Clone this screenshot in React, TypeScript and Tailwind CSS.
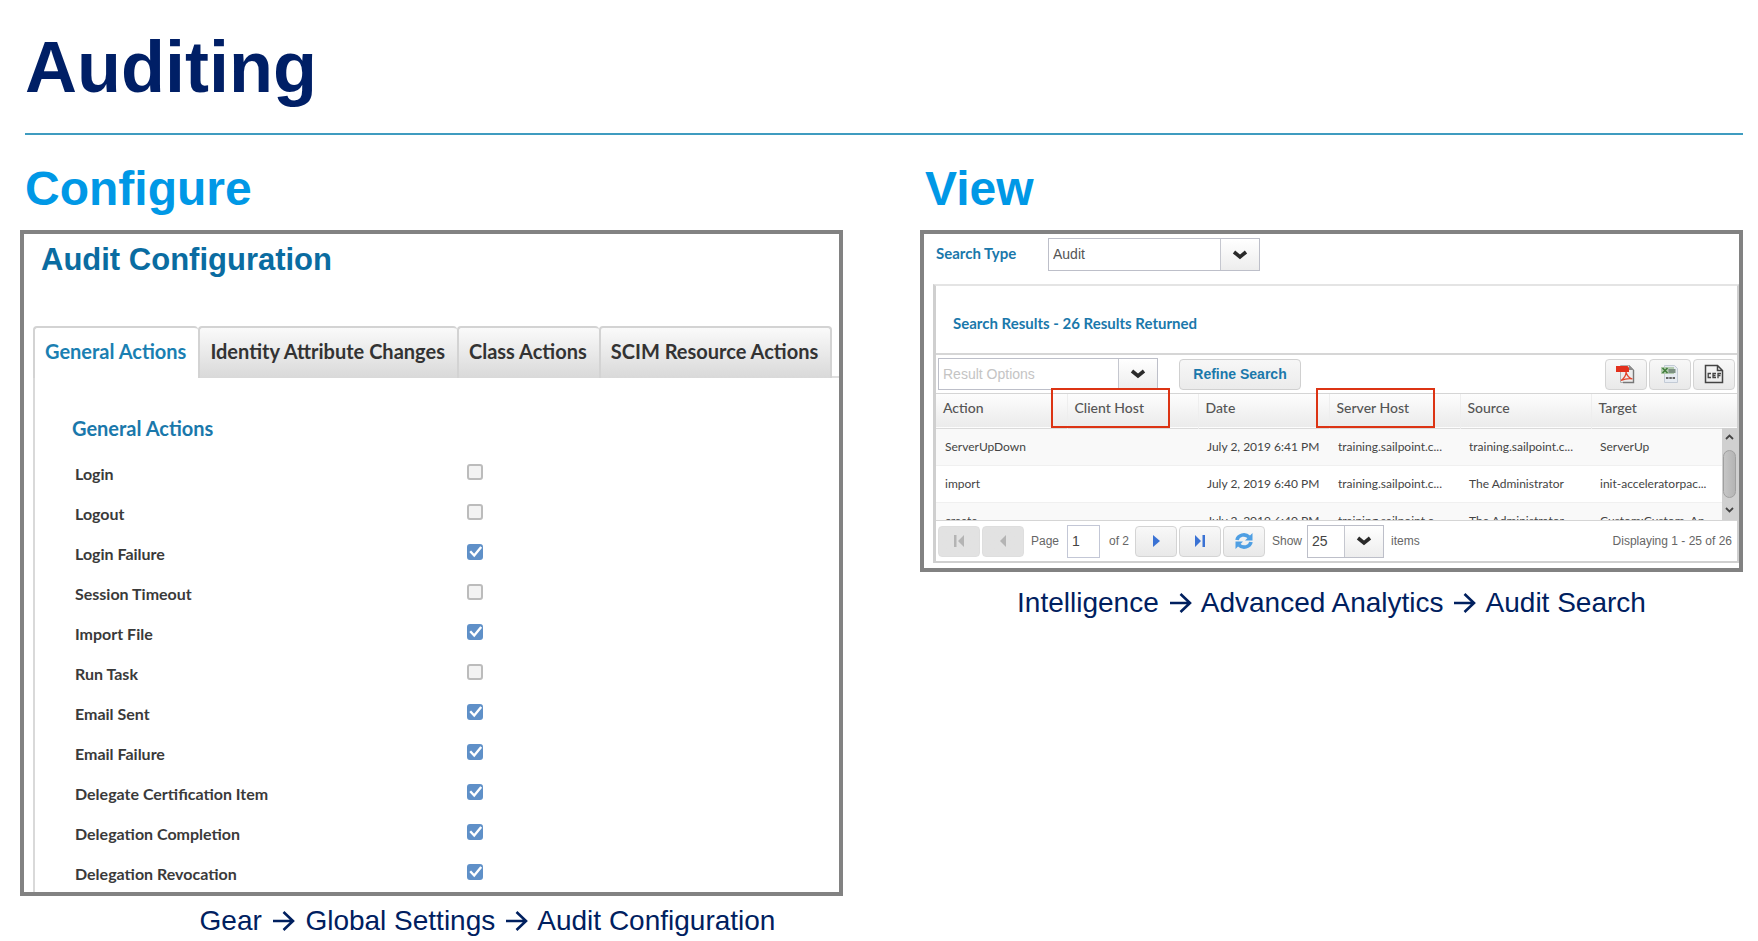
import { useState } from "react";
import type { ReactNode } from "react";

const tabs = ["General Actions", "Identity Attribute Changes", "Class Actions", "SCIM Resource Actions"];

const actions: [string, boolean][] = [
  ["Login", false],
  ["Logout", false],
  ["Login Failure", true],
  ["Session Timeout", false],
  ["Import File", true],
  ["Run Task", false],
  ["Email Sent", true],
  ["Email Failure", true],
  ["Delegate Certification Item", true],
  ["Delegation Completion", true],
  ["Delegation Revocation", true],
];

const columns = ["Action", "Client Host", "Date", "Server Host", "Source", "Target"];

const rows = [
  ["ServerUpDown", "", "July 2, 2019 6:41 PM", "training.sailpoint.c...", "training.sailpoint.c...", "ServerUp"],
  ["import", "", "July 2, 2019 6:40 PM", "training.sailpoint.c...", "The Administrator", "init-acceleratorpac..."],
  ["create", "", "July 2, 2019 6:40 PM", "training.sailpoint.c...", "The Administrator", "Custom:Custom_Ap..."],
];

function Chevron() {
  return (
    <svg viewBox="0 0 16 10" className="h-[10px] w-4" fill="none" stroke="#2a2a2a" strokeWidth="3.6">
      <path d="M2 2l6 5 6-5" />
    </svg>
  );
}

function Arrow() {
  return (
    <svg viewBox="0 0 28 20" className="inline-block h-5 w-7 align-[-1px]" fill="none" stroke="#00205f" strokeWidth="2.6">
      <path d="M3 10h20M13.500 1l9.500 9-9.500 9" />
    </svg>
  );
}

function Caption({ steps, className }: { steps: string[]; className: string }) {
  return (
    <p className={"text-center text-[28px] leading-8 text-[#00205f] " + className}>
      {steps.map((step, i) => (
        <span key={step}>
          {i > 0 && (
            <>
              {" "}
              <Arrow />{" "}
            </>
          )}
          {step}
        </span>
      ))}
    </p>
  );
}

function IconButton({ label, disabled, children }: { label: string; disabled?: boolean; children: ReactNode }) {
  return (
    <button
      type="button"
      aria-label={label}
      disabled={disabled}
      className="flex h-[31px] w-[42px] shrink-0 items-center justify-center rounded-sm border border-[#d4d4d4] bg-linear-to-b from-[#f8f8f8] to-[#e9e9e9] disabled:border-[#dedede] disabled:from-[#e2e2e2] disabled:to-[#e2e2e2]"
    >
      {children}
    </button>
  );
}

function Combo({ id, label, value, placeholder, className, inputClass }: { id: string; label: string; value?: string; placeholder?: string; className: string; inputClass: string }) {
  return (
    <div className={"flex shrink-0 border border-[#bdbfc9] bg-white " + className}>
      <input
        id={id}
        aria-label={label}
        defaultValue={value}
        placeholder={placeholder}
        className={"min-w-0 flex-1 pl-1 outline-none placeholder:text-[#c4c4c4] " + inputClass}
      />
      <button type="button" aria-label={"Open " + label} className="flex w-[39px] items-center justify-center border-l border-[#c5c7cf] bg-linear-to-b from-white to-[#ededed]">
        <Chevron />
      </button>
    </div>
  );
}

function ConfigurePanel() {
  const [active, setActive] = useState(0);
  return (
    <div className="border-4 border-[#828282] font-['Lato',sans-serif]">
      <h3 className="pt-[6px] pl-[17px] font-['Liberation_Sans',sans-serif] text-[31px] leading-10 font-bold text-[#0a6ca1]">Audit Configuration</h3>
      <div className="mt-[46px] ml-[9px]">
        <div role="tablist" className="flex">
          {tabs.map((tab, i) => (
            <button
              key={tab}
              type="button"
              role="tab"
              aria-selected={i === active}
              onClick={() => setActive(i)}
              className="h-[52px] shrink-0 rounded-t-sm border-t-2 border-l-2 border-[#d3d3d3] bg-linear-to-b from-[#fafafa] to-[#d9d9d9] pr-3 pb-1 pl-[10px] text-[20px] font-bold whitespace-nowrap text-[#333333] last-of-type:border-r-2 aria-selected:bg-none aria-selected:text-[#1a7fb2]"
            >
              {tab}
            </button>
          ))}
          <span className="flex-1 border-b-2 border-[#dedede]" />
        </div>
        <div role="tabpanel" className="border-l-2 border-[#d9d9d9] pt-9 pl-[37px]">
          <h4 className="text-[20px] leading-7 font-bold text-[#1a78ab]">General Actions</h4>
          <ul className="mt-[10px] pl-[3px]">
            {actions.map(([name, checked], i) => (
              <li key={name} className="grid h-10 grid-cols-[392px_1fr] items-center">
                <label htmlFor={"action-" + i} className="pt-1 text-[16px] font-bold text-[#3a3a3a]">
                  {name}
                </label>
                <span className="relative flex size-4">
                  <input
                    id={"action-" + i}
                    type="checkbox"
                    defaultChecked={checked}
                    className="peer size-4 appearance-none rounded-[3px] border-2 border-[#bcbcbc] bg-[#f3f3f3] checked:border-[#5f90c8] checked:bg-[#5f90c8]"
                  />
                  <svg viewBox="0 0 16 16" className="pointer-events-none absolute inset-0 hidden size-4 peer-checked:block" fill="none" stroke="#fff" strokeWidth="2.4">
                    <path d="M3.2 7.2l4 4.3 7-8.500" />
                  </svg>
                </span>
              </li>
            ))}
          </ul>
        </div>
      </div>
    </div>
  );
}

function ResultsTable() {
  return (
    <div className="relative">
      <div className="relative h-[128px] overflow-hidden border-y border-[#d5d5d5] font-['Lato',sans-serif]">
        <table className="w-full table-fixed border-collapse text-left">
          <colgroup>
            <col className="w-[131px]" />
            <col className="w-[131px]" />
            <col className="w-[131px]" />
            <col className="w-[131px]" />
            <col className="w-[131px]" />
            <col />
          </colgroup>
          <thead>
            <tr className="h-[34px] border-b border-[#dadada] bg-linear-to-b from-[#fdfdfd] to-[#ebebeb]">
              {columns.map((c) => (
                <th key={c} scope="col" className="border-r border-[#eeeeee] pb-1.5 pl-[7px] text-[14px] leading-5 font-medium text-[#555555] last:border-r-0">
                  {c}
                </th>
              ))}
            </tr>
          </thead>
          <tbody>
            {rows.map((row, r) => (
              <tr key={r} className="h-[37px] border-b border-[#f0f0f0] odd:bg-[#f9f9f9]">
                {row.map((cell, c) => (
                  <td key={c} className="truncate pl-[9px] text-[12px] leading-4 text-[#444444]">
                    {cell}
                  </td>
                ))}
              </tr>
            ))}
          </tbody>
        </table>
        <div aria-hidden="true" className="absolute top-[34px] right-0 bottom-0 flex w-[15px] flex-col items-center justify-between bg-[#d0d0d0]">
          <svg viewBox="0 0 15 18" className="w-[15px]" fill="none" stroke="#444" strokeWidth="1.8">
            <path d="M4 11l3.500-3.500L11 11" />
          </svg>
          <span className="h-12 w-[13px] rounded-full border border-[#a0a0a0] bg-linear-to-r from-[#c6c6c6] to-[#b4b4b4]" />
          <svg viewBox="0 0 15 18" className="w-[15px]" fill="none" stroke="#444" strokeWidth="1.8">
            <path d="M4 6l3.500 3.500L11 6" />
          </svg>
        </div>
      </div>
      <span className="pointer-events-none absolute -top-[5px] left-[115px] h-10 w-[119px] border-2 border-[#dc3414]" />
      <span className="pointer-events-none absolute -top-[5px] left-[380px] h-10 w-[119px] border-2 border-[#dc3414]" />
    </div>
  );
}

function ViewPanel() {
  return (
    <div className="border-4 border-[#828282] pb-[5px]">
      <div className="flex h-[50px] items-start pt-1 pl-3">
        <label htmlFor="search-type" className="w-[112px] pt-[3px] font-['Lato',sans-serif] text-[15px] leading-6 font-bold text-[#1a78ab]">
          Search Type
        </label>
        <Combo id="search-type" label="Search Type" value="Audit" className="h-[33px] w-[212px]" inputClass="text-[14px] text-[#555555]" />
      </div>
      <section className="ml-[9px] border-t-2 border-r-2 border-b-2 border-l-3 border-[#cfcfcf] border-t-[#e4e4e4]">
        <h4 className="border-b-2 border-[#d6d6d6] pt-[25px] pb-[18px] pl-[17px] font-['Lato',sans-serif] text-[15px] leading-6 font-bold text-[#1a78ab]">
          Search Results - 26 Results Returned
        </h4>
        <div className="flex h-[38px] items-center pr-0.5 pl-0.5">
          <Combo id="result-options" label="Result Options" placeholder="Result Options" className="h-8 w-[220px]" inputClass="text-[14px] text-[#555555]" />
          <button type="button" className="ml-[21px] h-[31px] w-[122px] rounded-sm border border-[#d0d0d0] bg-linear-to-b from-[#f7f7f7] to-[#ebebeb] text-[14px] font-bold text-[#1a78ab]">
            Refine Search
          </button>
          <div className="ml-auto flex gap-0.5">
            <IconButton label="Export PDF">
              <svg viewBox="0 0 20 20" className="size-5">
                <path d="M4.500 1.500h9l4 4v13h-13z" fill="#ededed" stroke="#b0b0b0" />
                <path d="M17.500 6v12.500H7" fill="none" stroke="#777" strokeWidth="1.4" />
                <path d="M13 1l5 5h-5z" fill="#8a8a8a" />
                <path d="M0 2h11.500l1.500 1.500V8H0z" fill="#e2301c" />
                <path d="M5 16.500c3-2 5-5 5-8.500 1 4 3 6 6.500 7-4-.8-7-.3-11.500 1.500z" fill="none" stroke="#e2452c" strokeWidth="1.2" />
              </svg>
            </IconButton>
            <IconButton label="Export Excel CSV">
              <svg viewBox="0 0 20 20" className="size-5">
                <path d="M4.500 1.500h10l3 3v14h-13z" fill="#e6ebf2" stroke="#c3cbd6" />
                <path d="M1 3h13v7H1z" fill="#b4ccb1" />
                <path d="M2.500 4l5 5M7.500 4l-5 5" stroke="#3f7e3b" strokeWidth="1.600" />
                <path d="M8.500 5h7v4h-7z" fill="#7d9183" />
                <path d="M6 14h9" stroke="#666" strokeWidth="2" strokeDasharray="2.500 .8" />
              </svg>
            </IconButton>
            <IconButton label="Export CEF">
              <svg viewBox="0 0 20 20" className="size-5" fill="none" stroke="#444" strokeWidth="1.5">
                <path d="M1.500 9V1.500h12l5 5V18.500h-17V9M13.500 1.500v5h5" />
                <path d="M7 9.500H4.200v4H7M12 9.500H9v4h3M9 11.500h2.500M14 14.200V9.500h3M14 11.500h2.500" strokeWidth="1.300" />
              </svg>
            </IconButton>
          </div>
        </div>
        <ResultsTable />
        <div className="flex h-10 items-center pr-[5px] pl-0.5 text-[12px] text-[#666666]">
          <div className="flex gap-0.5">
            <IconButton label="First page" disabled>
              <svg viewBox="0 0 14 14" className="size-[14px]" fill="#b4b4b4">
                <path d="M2 1h2.500v12H2zM12 1v12L6 7z" />
              </svg>
            </IconButton>
            <IconButton label="Previous page" disabled>
              <svg viewBox="0 0 14 14" className="size-[14px]" fill="#b4b4b4">
                <path d="M10 1v12L4 7z" />
              </svg>
            </IconButton>
          </div>
          <label htmlFor="page" className="w-[43px] pl-[7px]">
            Page
          </label>
          <input id="page" defaultValue="1" className="h-[33px] w-[33px] border border-[#c3c7d6] pl-1 text-[14px] text-[#444444] outline-none" />
          <span className="w-[35px] pl-[9px] whitespace-nowrap">of 2</span>
          <div className="flex gap-0.5">
            <IconButton label="Next page">
              <svg viewBox="0 0 14 14" className="size-[14px]" fill="#3a72d4">
                <path d="M4 1v12l7-6z" />
              </svg>
            </IconButton>
            <IconButton label="Last page">
              <svg viewBox="0 0 14 14" className="size-[14px]" fill="#3a72d4">
                <path d="M2 1v12l6-6zM9.500 1H12v12H9.500z" />
              </svg>
            </IconButton>
            <IconButton label="Refresh">
              <svg viewBox="0 0 20 20" className="size-5" fill="none" stroke="#4f9fe3" strokeWidth="3.600">
                <path d="M3 9c1-5 8-7 12-3M17 11c-1 5-8 7-12 3" />
                <path d="M18.500 2v7.500H11zM1.500 18v-7.500H9z" fill="#4f9fe3" stroke="none" />
              </svg>
            </IconButton>
          </div>
          <label htmlFor="page-size" className="w-[42px] pl-[7px]">
            Show
          </label>
          <Combo id="page-size" label="Page size" value="25" className="h-[33px] w-[77px]" inputClass="text-[14px] text-[#444444]" />
          <span className="pl-[7px]">items</span>
          <span className="ml-auto whitespace-nowrap">Displaying 1 - 25 of 26</span>
        </div>
      </section>
    </div>
  );
}

export default function App() {
  return (
    <main className="min-h-screen bg-white pr-[15px] pl-5 font-['Liberation_Sans',Arial,sans-serif]">
      <h1 className="ml-[5px] border-b-2 border-[#3f9cc0] pt-[27px] pb-[26px] text-[72px] leading-20 font-bold text-[#001f66]">Auditing</h1>
      <div className="grid grid-cols-2 items-start gap-[77px] pt-[26px]">
        <section>
          <h2 className="mb-[13px] pl-[5px] text-[48px] leading-14 font-bold text-[#0098e6]">Configure</h2>
          <ConfigurePanel />
          <Caption steps={["Gear", "Global Settings", "Audit Configuration"]} className="mt-[9px] pl-[112px]" />
        </section>
        <section>
          <h2 className="mb-[13px] pl-[5px] text-[48px] leading-14 font-bold text-[#0098e6]">View</h2>
          <ViewPanel />
          <Caption steps={["Intelligence", "Advanced Analytics", "Audit Search"]} className="mt-[15px]" />
        </section>
      </div>
    </main>
  );
}
